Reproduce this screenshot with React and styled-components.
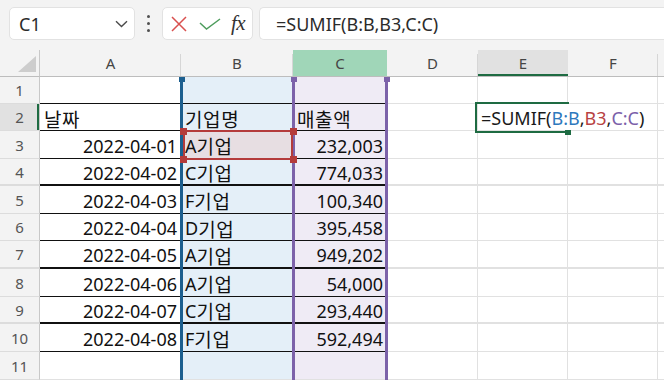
import React from 'react';
import styled, { createGlobalStyle, css } from 'styled-components';

const Global = createGlobalStyle`
  html, body { margin: 0; padding: 0; background: #ffffff; }
  body { font-family: "Noto Sans", "Noto Sans CJK KR", sans-serif; overflow: hidden; }
  #root { width: 664px; height: 380px; overflow: hidden; }
`;

const Page = styled.div`
  width: 664px;
  height: 380px;
  display: flex;
  flex-direction: column;
  background: #ffffff;
  overflow: hidden;
`;

const Toolbar = styled.div`
  flex: none;
  height: 50px;
  box-sizing: border-box;
  background: #f3f3f3;
  display: flex;
  align-items: flex-start;
  padding: 7px 0 0 9px;
`;

const Box = styled.div`
  height: 33px;
  box-sizing: border-box;
  background: #ffffff;
  border: 1px solid #e2e2e2;
  border-radius: 5px;
  display: flex;
  align-items: center;
`;

const NameBox = styled(Box)`
  width: 126px;
  padding: 0 6px 0 9px;
  justify-content: space-between;
  font-size: 18px;
  color: #2b2b2b;
`;

const DotsWrap = styled.div`
  width: 27px;
  height: 33px;
  display: flex;
  flex-direction: column;
  align-items: center;
  justify-content: center;
  gap: 4px;
`;

const Dot = styled.span`
  width: 3px;
  height: 3px;
  border-radius: 50%;
  background: #505050;
`;

const FxBox = styled(Box)`
  width: 91px;
  padding: 0 0 0 8px;
`;

const FxText = styled.span`
  font-family: "Liberation Serif", "DejaVu Serif", serif;
  font-style: italic;
  font-size: 21px;
  color: #333;
  margin-left: 10px;
  line-height: 1;
  letter-spacing: -0.5px;
`;

const FormulaInput = styled(Box)`
  flex: 1;
  margin-left: 6px;
  border-right: none;
  border-radius: 5px 0 0 5px;
  padding-left: 16px;
  font-size: 18px;
  color: #2b2b2b;
`;

const Sheet = styled.div`
  flex: 1;
  display: grid;
  grid-template-columns: 40px 141px 112px 94px 91px 90px 90px 1fr;
  grid-template-rows: 27px 27px 27px 28px 27px 28px 27px 28px 28px 27px 28px 28px;
`;

const place = css`
  grid-column: ${(p) => p.$c};
  grid-row: ${(p) => p.$r};
`;

const Corner = styled.div`
  ${place};
  background: #f3f3f3;
  border-right: 1px solid #c8c8c8;
  border-bottom: 1px solid #bdbdbd;
  display: flex;
  align-items: flex-end;
  justify-content: flex-end;
  padding: 0 3px 4px 0;
  box-sizing: border-box;
`;

const ColHeader = styled.div`
  ${place};
  position: relative;
  box-sizing: border-box;
  background: ${(p) => (p.$state === 'range' ? '#a0d6b8' : p.$state === 'selected' ? '#e1e1e1' : '#f3f3f3')};
  border-bottom: 1px solid #bdbdbd;
  box-shadow: ${(p) => (p.$state === 'selected' ? 'inset 0 -2px 0 #1e6b42' : 'none')};
  display: flex;
  align-items: center;
  justify-content: center;
  font-size: 15px;
  color: #454545;
  padding-bottom: 1px;
  &::after {
    content: '';
    position: absolute;
    right: 0;
    top: 4px;
    bottom: 0;
    width: 1px;
    background: ${(p) => (p.$state ? 'transparent' : '#d6d6d6')};
  }
`;

const RowHeader = styled.div`
  ${place};
  box-sizing: border-box;
  background: ${(p) => (p.$selected ? '#e1e1e1' : '#f3f3f3')};
  border-right: 1px solid #c8c8c8;
  border-bottom: ${(p) => p.$thick}px solid #dcdcdc;
  box-shadow: ${(p) => (p.$selected ? 'inset -2px 0 0 #1e6b42' : 'none')};
  display: flex;
  align-items: center;
  justify-content: center;
  font-size: 15px;
  color: #555;
`;

const Cell = styled.div`
  ${place};
  box-sizing: border-box;
  background: ${(p) => p.$bg || '#ffffff'};
  border-right: 1px solid #e1e1e1;
  border-bottom: ${(p) => p.$thick}px solid ${(p) => (p.$table ? '#111111' : '#e1e1e1')};
  display: flex;
  align-items: center;
  justify-content: ${(p) => (p.$align === 'right' ? 'flex-end' : 'flex-start')};
  padding: 2px 3px 0 4px;
  font-size: 18px;
  color: #111;
  white-space: nowrap;
  overflow: hidden;
`;

const Hangul = styled.span`
  font-family: "Noto Sans CJK KR", sans-serif;
  font-size: 19px;
  letter-spacing: 0.6px;
`;

const RangeBorder = styled.div`
  grid-column: ${(p) => p.$c};
  grid-row: 2 / -1;
  position: relative;
  z-index: ${(p) => p.$z};
  margin-left: -1px;
  margin-right: ${(p) => (p.$both ? '-1px' : '0')};
  border-left: 3px solid ${(p) => p.$color};
  border-right: ${(p) => (p.$both ? `3px solid ${p.$color}` : 'none')};
  pointer-events: none;
  &::before {
    content: '';
    position: absolute;
    top: 0;
    left: -4.5px;
    width: 6px;
    height: 5px;
    background: ${(p) => p.$color};
  }
  &::after {
    content: '';
    display: ${(p) => (p.$both ? 'block' : 'none')};
    position: absolute;
    top: 0;
    right: -4.5px;
    width: 6px;
    height: 5px;
    background: ${(p) => p.$color};
  }
`;

const RefBox = styled.div`
  grid-column: 3;
  grid-row: 4;
  position: relative;
  z-index: 3;
  margin: -1px 0 -1px 2px;
  border: 2px solid #b43b3b;
  pointer-events: none;
`;

const Handle = styled.span`
  position: absolute;
  width: 7px;
  height: 7px;
  background: ${(p) => p.$color};
  ${(p) => (p.$top ? 'top: -4.5px;' : 'bottom: -4.5px;')}
  ${(p) => (p.$left ? 'left: -5.5px;' : 'right: -5.5px;')}
`;

const FocusBox = styled.div`
  grid-column: 6;
  grid-row: 3;
  position: relative;
  z-index: 3;
  margin: -2px -1px -2px -3px;
  border: 2px solid #1e6b42;
  pointer-events: none;
`;

const FillHandle = styled.span`
  position: absolute;
  right: -4px;
  bottom: -4px;
  width: 6px;
  height: 6px;
  background: #1e6b42;
  z-index: 5;
`;

const Editor = styled.div`
  grid-column: 6 / span 2;
  grid-row: 3;
  z-index: 4;
  justify-self: start;
  margin-bottom: 1px;
  background: #ffffff;
  padding: 2px 6px 0 3px;
  display: flex;
  align-items: center;
  font-size: 18px;
  color: #1a1a1a;
  white-space: nowrap;
`;

const Ref = styled.span`
  color: ${(p) => p.$color};
`;

const columns = ['A', 'B', 'C', 'D', 'E', 'F', ''];
const dates = ['2022-04-01', '2022-04-02', '2022-04-03', '2022-04-04', '2022-04-05', '2022-04-06', '2022-04-07', '2022-04-08'];
const firms = ['A기업', 'C기업', 'F기업', 'D기업', 'A기업', 'A기업', 'C기업', 'F기업'];
const sales = ['232,003', '774,033', '100,340', '395,458', '949,202', '54,000', '293,440', '592,494'];
const thickRows = [4, 7, 9];

const BLUE = '#1c5f8f';
const PURPLE = '#7c62a9';

function renderText(text) {
  const parts = text.split(/([\uAC00-\uD7A3]+)/).filter(Boolean);
  return parts.map((p, i) => (/[\uAC00-\uD7A3]/.test(p) ? <Hangul key={i}>{p}</Hangul> : <span key={i}>{p}</span>));
}

function cellContent(row, col) {
  if (row === 2) {
    return ['날짜', '기업명', '매출액'][col] ?? '';
  }
  if (row >= 3 && row <= 10) {
    const i = row - 3;
    return [dates[i], firms[i], sales[i]][col] ?? '';
  }
  return '';
}

function cellBg(row, col) {
  if (col === 1) return row === 3 ? '#e7dee2' : '#e4eff8';
  if (col === 2) return '#efebf5';
  return '#ffffff';
}

export default function App() {
  const rows = Array.from({ length: 11 }, (_, i) => i + 1);
  return (
    <Page>
      <Global />
      <Toolbar>
        <NameBox>
          <span>C1</span>
          <svg width="13" height="8" viewBox="0 0 13 8">
            <path d="M1 1.2 L6.5 6.5 L12 1.2" fill="none" stroke="#4a4a4a" strokeWidth="1.4" />
          </svg>
        </NameBox>
        <DotsWrap>
          <Dot />
          <Dot />
          <Dot />
        </DotsWrap>
        <FxBox>
          <svg width="16" height="16" viewBox="0 0 16 16">
            <path d="M1 1 L15 15 M15 1 L1 15" stroke="#d9504f" strokeWidth="1.5" fill="none" />
          </svg>
          <svg width="22" height="12" viewBox="0 0 22 12" style={{ marginLeft: 12 }}>
            <path d="M1 5 L7.5 11 L21 1" stroke="#4f9d5e" strokeWidth="1.5" fill="none" />
          </svg>
          <FxText>fx</FxText>
        </FxBox>
        <FormulaInput>=SUMIF(B:B,B3,C:C)</FormulaInput>
      </Toolbar>
      <Sheet>
        <Corner $c={1} $r={1}>
          <svg width="18" height="16" viewBox="0 0 18 16">
            <polygon points="18,0 18,16 0,16" fill="#cdcdcd" />
          </svg>
        </Corner>
        {columns.map((c, i) => (
          <ColHeader key={i} $c={i + 2} $r={1} $state={i === 2 ? 'range' : i === 4 ? 'selected' : undefined}>
            {c}
          </ColHeader>
        ))}
        {rows.map((r) => {
          const thick = thickRows.includes(r) ? 2 : 1;
          return (
            <React.Fragment key={r}>
              <RowHeader $c={1} $r={r + 1} $selected={r === 2} $thick={thick}>
                {r}
              </RowHeader>
              {columns.map((_, ci) => (
                <Cell
                  key={ci}
                  $c={ci + 2}
                  $r={r + 1}
                  $bg={cellBg(r, ci)}
                  $thick={thick}
                  $table={ci <= 2 && r >= 1 && r <= 10}
                  $align={r >= 3 && (ci === 0 || ci === 2) ? 'right' : 'left'}
                >
                  {renderText(cellContent(r, ci))}
                </Cell>
              ))}
            </React.Fragment>
          );
        })}
        <RangeBorder $c={3} $color={BLUE} $z={2} />
        <RangeBorder $c={4} $color={PURPLE} $z={2} $both />
        <RefBox>
          <Handle $color="#b43b3b" $top $left />
          <Handle $color="#b43b3b" $top />
          <Handle $color="#b43b3b" $left />
          <Handle $color="#b43b3b" />
        </RefBox>
        <FocusBox>
          <FillHandle />
        </FocusBox>
        <Editor>
          =SUMIF(<Ref $color="#2e78bd">B:B</Ref>,<Ref $color="#b84242">B3</Ref>,<Ref $color="#7b60a9">C:C</Ref>)
        </Editor>
      </Sheet>
    </Page>
  );
}
